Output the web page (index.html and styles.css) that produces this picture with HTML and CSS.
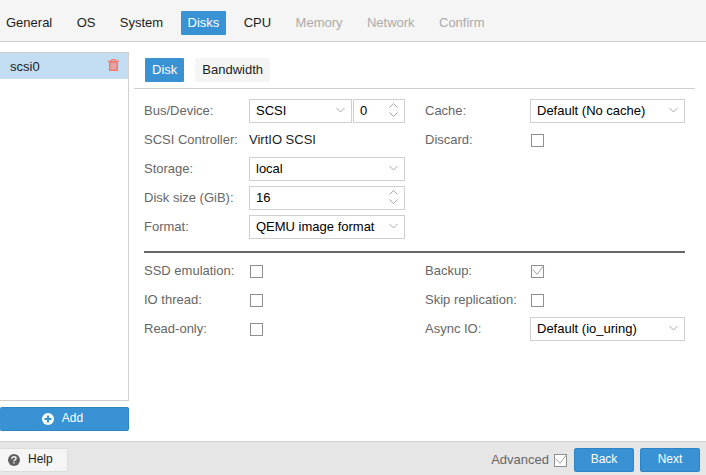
FILE: index.html
```html
<!DOCTYPE html>
<html>
<head>
  <title>Create: Virtual Machine</title>
  <link rel="stylesheet" href="styles.css">
</head>
<body>
  <div class="tabs">
    <span class="tab">General</span>
    <span class="tab">OS</span>
    <span class="tab">System</span>
    <span class="tab active">Disks</span>
    <span class="tab">CPU</span>
    <span class="tab off">Memory</span>
    <span class="tab off">Network</span>
    <span class="tab off">Confirm</span>
  </div>

  <div class="main">
    <div class="side">
      <div class="disk-list">
        <div class="disk-row">
          <span>scsi0</span>
          <svg class="trash" width="11" height="12" viewBox="0 0 11 12">
            <path d="M3.500 2V.5h4V2" fill="none" stroke="#f4786c"/>
            <path d="M0 1.500h11V3H0z" fill="#f4786c"/>
            <path d="M1.700 3h7.600v8.200H1.700z" fill="#e3a3a6" stroke="#f4786c" stroke-width="1.500"/>
          </svg>
        </div>
      </div>
      <button class="btn add">
        <svg width="12" height="12" viewBox="0 0 12 12">
          <circle cx="6" cy="6" r="6" fill="#fff"/>
          <path d="M6 2.500v7M2.500 6h7" stroke="#3892d4" stroke-width="2.200"/>
        </svg>
        <span>Add</span>
      </button>
    </div>

    <div class="panel">
      <div class="subtabs">
        <span class="subtab active">Disk</span>
        <span class="subtab">Bandwidth</span>
      </div>

      <div class="form">
        <div class="columns">
          <div class="col">
            <div class="row">
              <label>Bus/Device:</label>
              <div class="select bus">SCSI<svg class="chev" width="9" height="6" viewBox="0 0 9 6"><path d="M.5 1l4 4 4-4"/></svg></div>
              <div class="spin dev">0
                <svg class="updown" width="9" height="16" viewBox="0 0 9 16"><path d="M.5 5.500l4-4 4 4M.5 10.500l4 4 4-4"/></svg>
              </div>
            </div>
            <div class="row">
              <label>SCSI Controller:</label>
              <span class="value">VirtIO SCSI</span>
            </div>
            <div class="row">
              <label>Storage:</label>
              <div class="select grow">local<svg class="chev" width="9" height="6" viewBox="0 0 9 6"><path d="M.5 1l4 4 4-4"/></svg></div>
            </div>
            <div class="row">
              <label>Disk size (GiB):</label>
              <div class="spin grow">16
                <svg class="updown" width="9" height="16" viewBox="0 0 9 16"><path d="M.5 5.500l4-4 4 4M.5 10.500l4 4 4-4"/></svg>
              </div>
            </div>
            <div class="row">
              <label>Format:</label>
              <div class="select grow">QEMU image format<svg class="chev" width="9" height="6" viewBox="0 0 9 6"><path d="M.5 1l4 4 4-4"/></svg></div>
            </div>
          </div>
          <div class="col">
            <div class="row">
              <label>Cache:</label>
              <div class="select grow">Default (No cache)<svg class="chev" width="9" height="6" viewBox="0 0 9 6"><path d="M.5 1l4 4 4-4"/></svg></div>
            </div>
            <div class="row">
              <label>Discard:</label>
              <span class="check"></span>
            </div>
          </div>
        </div>

        <div class="divider"></div>

        <div class="columns">
          <div class="col">
            <div class="row">
              <label>SSD emulation:</label>
              <span class="check"></span>
            </div>
            <div class="row">
              <label>IO thread:</label>
              <span class="check"></span>
            </div>
            <div class="row">
              <label>Read-only:</label>
              <span class="check"></span>
            </div>
          </div>
          <div class="col">
            <div class="row">
              <label>Backup:</label>
              <span class="check"><svg width="11" height="11" viewBox="0 0 11 11"><path d="M.7 3.700L5 8.300 11.700-.3"/></svg></span>
            </div>
            <div class="row">
              <label>Skip replication:</label>
              <span class="check"></span>
            </div>
            <div class="row">
              <label>Async IO:</label>
              <div class="select grow">Default (io_uring)<svg class="chev" width="9" height="6" viewBox="0 0 9 6"><path d="M.5 1l4 4 4-4"/></svg></div>
            </div>
          </div>
        </div>
      </div>
    </div>
  </div>

  <div class="footer">
    <button class="btn help">
      <svg width="12" height="12" viewBox="0 0 14 14">
        <circle cx="7" cy="7" r="7" fill="#606060"/>
        <path d="M4.600 5.400c0-1.400 1.100-2.200 2.400-2.200s2.400.9 2.400 2c0 1.800-2.400 1.600-2.400 3.300" fill="none" stroke="#f5f5f5" stroke-width="1.700"/>
        <path d="M6.100 9.500h1.800v1.700H6.100z" fill="#f5f5f5"/>
      </svg>
      <span>Help</span>
    </button>
    <span class="adv">Advanced</span>
    <span class="check adv-check"><svg width="11" height="11" viewBox="0 0 11 11"><path d="M.7 3.700L5 8.300 11.700-.3"/></svg></span>
    <button class="btn nav">Back</button>
    <button class="btn nav">Next</button>
  </div>
</body>
</html>
```

FILE: styles.css
```css
html, body {
  height: 100%;
}

body {
  margin: 0;
  display: flex;
  flex-direction: column;
  overflow: hidden;
  font-family: "Liberation Sans", Arial, sans-serif;
  font-size: 13px;
  color: #000;
  background: #fff;
}

.tabs {
  flex: none;
  height: 30px;
  display: flex;
  gap: 10.4px;
  padding: 11px 0 0;
  background: #f5f5f5;
  border-bottom: 1px solid #cfcfcf;
}

.tab {
  height: 24px;
  line-height: 23px;
  padding: 0 7px;
  border-radius: 1px;
  color: #1c1c1c;
}

.tab:first-child {
  margin-left: -1px;
}

.tab.active {
  background: #3892d4;
  color: #fff;
}

.tab.off {
  color: #ababab;
}

.main {
  flex: 1;
  display: flex;
  min-height: 0;
}

.side {
  width: 129px;
  flex: none;
  display: flex;
  flex-direction: column;
  padding: 10px 0;
  box-sizing: border-box;
}

.disk-list {
  flex: 1;
  border: 1px solid #cfcfcf;
  border-left: none;
  margin-bottom: 6px;
}

.disk-row {
  height: 26px;
  display: flex;
  align-items: center;
  justify-content: space-between;
  padding: 0 9px 0 10px;
  background: #c2ddf2;
  color: #1c1c1c;
}

.trash {
  margin-bottom: 2px;
}

.btn {
  height: 24px;
  padding: 0;
  font: inherit;
  font-size: 12px;
  border-radius: 2px;
  box-sizing: border-box;
}

.btn span {
  padding-bottom: 3px;
}

.add, .nav {
  background: #3892d4;
  border: 1px solid #2d85c6;
  color: #fff;
}

.add {
  flex: none;
  display: flex;
  align-items: center;
  justify-content: center;
  gap: 8px;
  padding-right: 3px;
  border-left: none;
}

.panel {
  flex: 1;
  margin: 0 11px 0 5px;
  padding-top: 16px;
  min-width: 0;
}

.subtabs {
  display: flex;
  gap: 11px;
  padding: 0 0 6px 11px;
  border-bottom: 1px solid #cfcfcf;
}

.subtab {
  height: 24px;
  line-height: 23px;
  padding: 0 7px;
  background: #f5f5f5;
  color: #1c1c1c;
  border-radius: 1px;
}

.subtab.active {
  background: #3892d4;
  color: #fff;
}

.form {
  padding: 10px 10px 0;
}

.columns {
  display: flex;
  gap: 20px;
}

.col {
  flex: 1;
  min-width: 0;
}

.col:first-child {
  flex: 0 0 261px;
}

.row {
  height: 24px;
  margin-bottom: 5px;
  display: flex;
  align-items: center;
}

.row label {
  width: 105px;
  flex: none;
  padding-bottom: 2px;
  color: #666;
}

.value {
  padding-bottom: 2px;
  color: #1c1c1c;
}

.select, .spin {
  height: 24px;
  display: flex;
  align-items: center;
  justify-content: space-between;
  padding: 0 6px 2px;
  border: 1px solid #cfcfcf;
  background: #fff;
  color: #000;
  box-sizing: border-box;
}

.grow {
  flex: 1;
  min-width: 0;
}

.bus {
  width: 103px;
  flex: none;
  margin-right: 1px;
}

.dev {
  flex: 1;
}

.chev, .updown {
  flex: none;
}

.chev path, .updown path {
  fill: none;
  stroke: #a8a8a8;
  stroke-width: 1;
}

.check {
  width: 13px;
  height: 13px;
  display: block;
  box-sizing: border-box;
  border: 1px solid #8f8f8f;
  background: #fff;
  margin-left: 1px;
}

.check svg {
  display: block;
  overflow: visible;
}

.check path {
  fill: none;
  stroke: #a0a0a0;
  stroke-width: 1;
}

.divider {
  height: 2px;
  background: #666;
  margin: 7px 0 6px;
}

.footer {
  flex: none;
  height: 27px;
  display: flex;
  align-items: flex-start;
  padding-top: 6px;
  background: #e6e6e6;
  border-top: 1px solid #cfcfcf;
}

.help {
  width: 68px;
  display: flex;
  align-items: center;
  gap: 8px;
  padding-left: 8px;
  background: #f5f5f5;
  border: 1px solid #dcdcdc;
  border-left: none;
  color: #1c1c1c;
}

.adv {
  margin-left: auto;
  line-height: 23px;
  color: #666;
}

.adv-check {
  margin: 6px 7px 0 5px;
}

.nav {
  width: 60px;
  margin-right: 6px;
  padding-bottom: 3px;
}
```
